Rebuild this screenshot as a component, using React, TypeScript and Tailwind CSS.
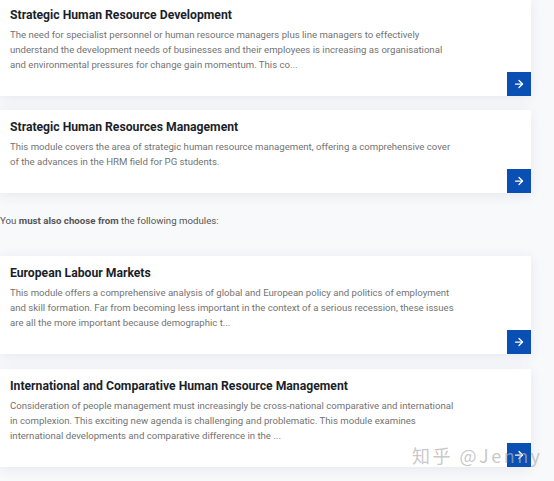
import { ArrowRight } from 'lucide-react';

const modules = [
  {
    title: 'Strategic Human Resource Development',
    lines: [
      'The need for specialist personnel or human resource managers plus line managers to effectively',
      'understand the development needs of businesses and their employees is increasing as organisational',
      'and environmental pressures for change gain momentum. This co...',
    ],
  },
  {
    title: 'Strategic Human Resources Management',
    lines: [
      'This module covers the area of strategic human resource management, offering a comprehensive cover',
      'of the advances in the HRM field for PG students.',
    ],
  },
];

const optional = [
  {
    title: 'European Labour Markets',
    lines: [
      'This module offers a comprehensive analysis of global and European policy and politics of employment',
      'and skill formation. Far from becoming less important in the context of a serious recession, these issues',
      'are all the more important because demographic t...',
    ],
  },
  {
    title: 'International and Comparative Human Resource Management',
    lines: [
      'Consideration of people management must increasingly be cross-national comparative and international',
      'in complexion. This exciting new agenda is challenging and problematic. This module examines',
      'international developments and comparative difference in the ...',
    ],
  },
];

function ModuleCard({ title, lines }: { title: string; lines: string[] }) {
  return (
    <div className="bg-white shadow-[0_2px_12px_rgba(40,60,110,0.09)] pt-[9px] pl-[10px]">
      <h3 className="text-[12.2px] leading-[16px] font-bold text-[#1b1f2a]">{title}</h3>
      <p className="mt-[4px] text-[9.6px] leading-[15px] text-[#737373] whitespace-nowrap">
        {lines.map((l) => (
          <span key={l} className="block">{l}</span>
        ))}
      </p>
      <div className="flex justify-end">
        <div className="w-[24px] h-[24px] bg-[#0a4fb3] flex items-center justify-center">
          <ArrowRight size={12} strokeWidth={2.5} color="white" />
        </div>
      </div>
    </div>
  );
}

export default function App() {
  return (
    <div className="relative w-[554px] h-[481px] overflow-hidden bg-[#f8f9fb] font-['Roboto',sans-serif]">
      <div className="-mt-[2px] w-[531px] flex flex-col">
        <ModuleCard {...modules[0]} />
        <div className="mt-[14px]">
          <ModuleCard {...modules[1]} />
        </div>
        <p className="mt-[20px] mb-[28px] text-[9.7px] leading-[15px] text-[#555]">
          You <span className="font-bold">must also choose from</span> the following modules:
        </p>
        <ModuleCard {...optional[0]} />
        <div className="mt-[15px]">
          <ModuleCard {...optional[1]} />
        </div>
      </div>
      <div className="absolute left-[412px] top-[444px] text-[18px] leading-[22px] tracking-[2.5px] text-[rgba(175,175,175,0.7)] font-['Noto_Sans_CJK_SC',sans-serif] whitespace-nowrap">
        知乎 @Jenny
      </div>
    </div>
  );
}
